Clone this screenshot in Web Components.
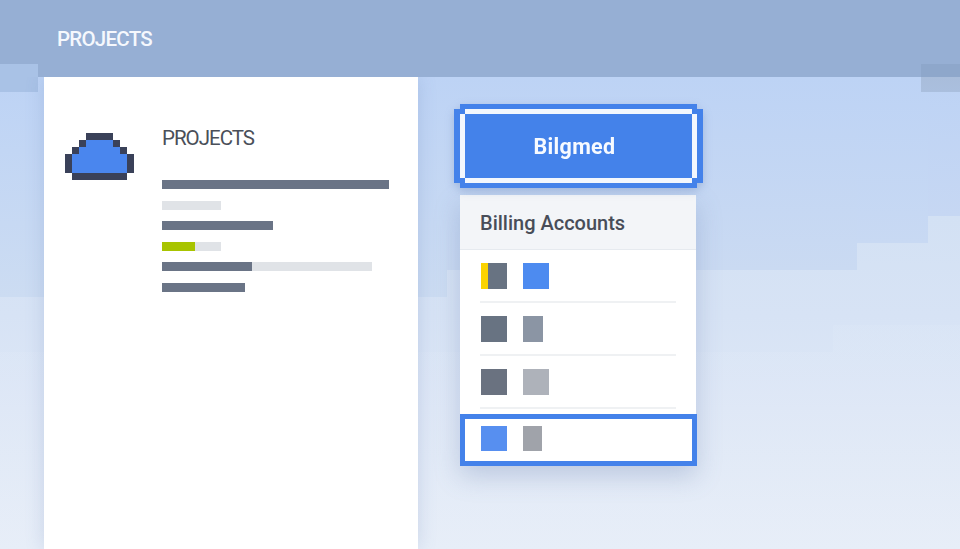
<!DOCTYPE html>
<html lang="en">
<head>
<meta charset="utf-8">
<title>Projects</title>
<style>
  html, body { margin: 0; padding: 0; height: 100%; overflow: hidden; }
  body { font-family: Roboto, "Liberation Sans", sans-serif; }
</style>
</head>
<body>
<app-shell>
  <top-bar slot="bar">PROJECTS</top-bar>
  <project-card slot="card">PROJECTS</project-card>
  <account-panel slot="side" name="Bilgmed" heading="Billing Accounts"></account-panel>
</app-shell>

<script>
// App shell: the stepped backdrop is painted as background layers on the host
const ShellTemplate = document.createElement('template');
ShellTemplate.innerHTML = `
  <style>
  :host {
    display: block;
    width: 960px;
    height: 549px;
    overflow: hidden;
    background-repeat: no-repeat;
    background-image:
      linear-gradient(#a9c2e6, #a9c2e6),
      linear-gradient(#a9bddb, #aabfde),
      linear-gradient(#bdd3f5, #ccdcf2),
      linear-gradient(#bdd3f5, #cadaf2),
      linear-gradient(#bdd3f5, #c8d9f3),
      linear-gradient(#bdd3f5, #c6d7f3),
      linear-gradient(rgba(255,255,255,.06), rgba(255,255,255,.06)),
      linear-gradient(rgba(255,255,255,.06), rgba(255,255,255,.06)),
      linear-gradient(#d3e1f4, #d7e3f5 30%, #e6edf8);
    background-size:
      38px 15px,
      39px 15px,
      447px 220px,
      410px 193px,
      71px 166px,
      32px 139px,
      960px 197px,
      127px 27px,
      960px 333px;
    background-position:
      0 77px,
      921px 77px,
      0 77px,
      447px 77px,
      857px 77px,
      928px 77px,
      0 352px,
      833px 325px,
      0 216px;
  }
  .cols {
    display: flex;
    padding-left: 44px;
    gap: 36px;
    align-items: flex-start;
  }
  </style>
  <slot name="bar"></slot>
  <div class="cols">
    <slot name="card"></slot>
    <slot name="side"></slot>
  </div>`;

class AppShell extends HTMLElement {
  constructor() {
    super();
    this.attachShadow({mode: 'open'});
    this.shadowRoot.appendChild(ShellTemplate.content.cloneNode(true));
  }
}
customElements.define("app-shell", AppShell);

// Header strip
const BarTemplate = document.createElement('template');
BarTemplate.innerHTML = `
  <style>
  :host {
    display: flex;
    align-items: center;
    box-sizing: border-box;
    height: 77px;
    padding: 0 0 0 57px;
    position: relative;
    z-index: 1;
    color: #f5f8fd;
    font: 500 20.5px Roboto, sans-serif;
    letter-spacing: -.75px;
    background-color: #96afd4;
    background-repeat: no-repeat;
    background-image:
      linear-gradient(#8ea7cb, #8ea7cb),
      linear-gradient(#a9c2e6, #a9c2e6);
    background-size: 39px 13px, 38px 13px;
    background-position: 921px 64px, 0 64px;
  }
  </style>
  <slot></slot>`;

class TopBar extends HTMLElement {
  constructor() {
    super();
    this.attachShadow({mode: 'open'});
    this.shadowRoot.appendChild(BarTemplate.content.cloneNode(true));
  }
}
customElements.define("top-bar", TopBar);

// Left card, pixel cloud + placeholder bars
const CardTemplate = document.createElement('template');
CardTemplate.innerHTML = `
  <style>
  :host {
    display: flex;
    box-sizing: border-box;
    width: 374px;
    height: 472px;
    padding: 51px 0 0 21px;
    background: #fff;
    box-shadow: 0 0 18px rgba(80, 110, 170, .2);
  }
  svg { display: block; flex: none; margin: 5px 28px 0 0; }
  .title {
    font: 400 20.5px/21px Roboto, sans-serif;
    letter-spacing: -1px;
    color: #4a4f59;
    margin-bottom: 31px;
  }
  .bars { display: flex; flex-direction: column; gap: 11.5px; }
  .bar { display: flex; height: 9px; background: #e0e3e7; }
  .bar i { display: block; height: 100%; background: #6a7486; }
  .bar i.ok { background: #a8c400; }
  </style>
  <svg width="69" height="47" viewBox="0 0 69 47" shape-rendering="crispEdges">
    <path fill="#3a4159" d="M21 0h27v7h7v7h7v7h7v19h-7v7H7v-7H0V21h7v-7h7V7h7z"/>
    <path fill="#4a86ee" d="M21 7h27v7h7v7h7v19H7V21h7v-7h7z"/>
  </svg>
  <div>
    <div class="title"><slot></slot></div>
    <div class="bars">
      <div class="bar" style="width:227px"><i style="width:100%"></i></div>
      <div class="bar" style="width:59px"></div>
      <div class="bar" style="width:111px"><i style="width:100%"></i></div>
      <div class="bar" style="width:59px"><i class="ok" style="width:33px"></i></div>
      <div class="bar" style="width:210px"><i style="width:90px"></i></div>
      <div class="bar" style="width:83px"><i style="width:100%"></i></div>
    </div>
  </div>`;

class ProjectCard extends HTMLElement {
  constructor() {
    super();
    this.attachShadow({mode: 'open'});
    this.shadowRoot.appendChild(CardTemplate.content.cloneNode(true));
  }
}
customElements.define("project-card", ProjectCard);

// One row of the accounts list
const RowTemplate = document.createElement('template');
RowTemplate.innerHTML = `
  <style>
  :host { display: block; padding: 0 20px 0 21px; }
  .row {
    display: flex;
    gap: 16px;
    box-sizing: border-box;
    height: 53px;
    padding-top: 13px;
    margin-left: -1px;
    padding-left: 1px;
    border-bottom: 2px solid #eff1f3;
  }
  .sq { height: 26px; width: var(--w, 26px); }
  .a { background: var(--a); }
  .b { background: var(--b); }
  .flag { background: linear-gradient(90deg, #fbd300 7px, var(--a) 7px); }
  </style>
  <div class="row"><div class="sq a"></div><div class="sq b"></div></div>`;

class AccountRow extends HTMLElement {
  constructor() {
    super();
    this.attachShadow({mode: 'open'});
    this.shadowRoot.appendChild(RowTemplate.content.cloneNode(true));
    const root = this.shadowRoot;
    root.querySelector(".a").style.setProperty("--a", this.getAttribute("a"));
    root.querySelector(".b").style.setProperty("--b", this.getAttribute("b"));
    root.querySelector(".b").style.setProperty("--w", (this.getAttribute("w") || 26) + "px");
    if (this.hasAttribute("flag")) root.querySelector(".a").classList.add("flag");
  }
}
customElements.define("account-row", AccountRow);

// Right side: notched button and the dropdown under it
const PanelTemplate = document.createElement('template');
PanelTemplate.innerHTML = `
  <style>
  :host { display: block; width: 249px; margin-top: 27px; }
  .btn-wrap { filter: drop-shadow(0 3px 4px rgba(70, 100, 160, .28)); }
  .notch {
    box-sizing: border-box;
    height: 100%;
    clip-path: polygon(
      var(--nx) 0, calc(100% - var(--nx)) 0, calc(100% - var(--nx)) 5px, 100% 5px,
      100% calc(100% - 5px), calc(100% - var(--nx)) calc(100% - 5px), calc(100% - var(--nx)) 100%,
      var(--nx) 100%, var(--nx) calc(100% - 5px), 0 calc(100% - 5px), 0 5px, var(--nx) 5px);
  }
  .outer { --nx: 6px; height: 84px; padding: 5px 6px; background: #4482ea; }
  .ring { --nx: 5px; padding: 5px; background: #f3f7fd; }
  .inner {
    display: flex;
    align-items: center;
    justify-content: center;
    box-sizing: border-box;
    height: 100%;
    padding-right: 8px;
    background: #4482ea;
    color: #f7faff;
    font: 700 21.5px Roboto, sans-serif;
    letter-spacing: .3px;
  }
  .menu {
    width: 236px;
    margin: 7px 0 0 6px;
    background: #fff;
    box-shadow: 0 10px 24px rgba(90, 115, 165, .28);
  }
  .head {
    box-sizing: border-box;
    height: 55px;
    padding: 16px 0 0 20px;
    background: #f3f5f8;
    border-bottom: 1px solid #e6eaef;
    color: #484d59;
    font: 500 20px/24px Roboto, sans-serif;
  }
  .picked {
    box-sizing: border-box;
    display: flex;
    gap: 16px;
    width: 237px;
    height: 52px;
    margin-top: 5px;
    padding: 7px 0 0 16px;
    border: 5px solid #4482ea;
    background: #fff;
  }
  .picked div { height: 25px; }
  </style>
  <div class="btn-wrap">
    <div class="notch outer">
      <div class="notch ring">
        <div class="inner"></div>
      </div>
    </div>
  </div>
  <div class="menu">
    <div class="head"></div>
    <account-row flag a="#687382" b="#4d8bf0"></account-row>
    <account-row a="#687382" b="#8b95a4" w="20"></account-row>
    <account-row a="#6a7280" b="#aeb2ba"></account-row>
    <div class="picked">
      <div style="width:26px;background:#578ff0"></div>
      <div style="width:19px;background:#a0a3aa"></div>
    </div>
  </div>`;

class AccountPanel extends HTMLElement {
  constructor() {
    super();
    this.attachShadow({mode: 'open'});
    this.shadowRoot.appendChild(PanelTemplate.content.cloneNode(true));
    this.shadowRoot.querySelector(".inner").innerText = this.getAttribute("name");
    this.shadowRoot.querySelector(".head").innerText = this.getAttribute("heading");
  }
}
customElements.define("account-panel", AccountPanel);
</script>
</body>
</html>
